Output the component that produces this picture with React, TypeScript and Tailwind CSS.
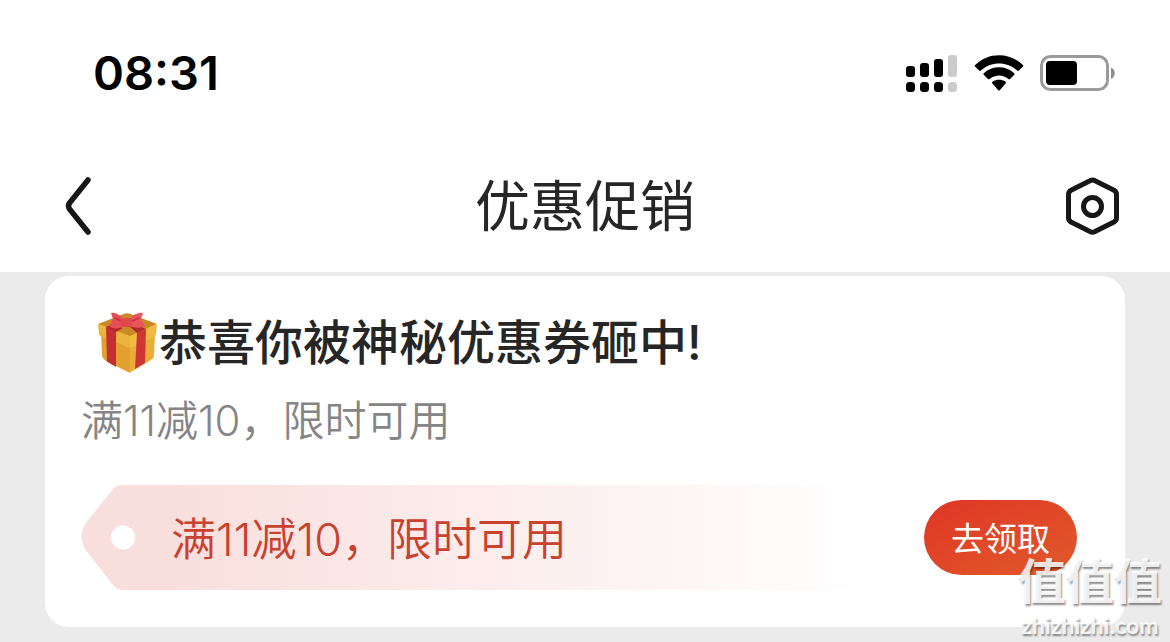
import React from 'react';

function SignalIcon() {
  return (
    <svg width="52" height="38" viewBox="0 0 52 38" aria-hidden="true">
      <rect x="0" y="11" width="9" height="11" rx="3" />
      <rect x="14" y="8" width="9" height="14" rx="3" />
      <rect x="28" y="4" width="9" height="18" rx="3" />
      <rect x="42" y="0" width="9" height="22" rx="3" fill="#cbcbcb" />
      <rect x="0" y="27" width="9" height="10" rx="3.5" />
      <rect x="14" y="27" width="9" height="10" rx="3.5" />
      <rect x="28" y="27" width="9" height="10" rx="3.5" />
      <rect x="42" y="27" width="9" height="10" rx="3.5" fill="#cbcbcb" />
    </svg>
  );
}

function WifiIcon() {
  return (
    <svg width="50" height="38" viewBox="0 0 50 38" aria-hidden="true">
      <path d="M1 11.5Q0.400 10.800 1.200 10C14.500 -3 35.500 -3 48.800 10Q49.600 10.800 49 11.500L44.800 15.600Q44 16.300 43.200 15.600C33 6 17 6 6.800 15.600Q6 16.300 5.200 15.600Z" />
      <path d="M9.700 19.700Q9 19 9.800 18.200C18.400 10.400 31.600 10.400 40.200 18.200Q41 19 40.300 19.700L36 24Q35.200 24.600 34.400 24C29 19.300 21 19.300 15.600 24Q14.800 24.600 14 24Z" />
      <path d="M18.300 28.300Q17.600 27.400 18.500 26.700C22.300 24.100 27.700 24.100 31.500 26.700Q32.400 27.400 31.700 28.300L25.800 35.200Q25 36 24.200 35.200Z" />
    </svg>
  );
}

function BatteryIcon() {
  return (
    <svg width="76" height="38" viewBox="0 0 76 38" aria-hidden="true">
      <rect x="1.500" y="1.500" width="66" height="33" rx="9" fill="#fff" stroke="#9b9b9b" strokeWidth="3" />
      <rect x="6" y="6" width="31" height="24" rx="4" />
      <path d="M71 12.500C76 15 76 21.500 71 24Z" fill="#8f8f8f" />
    </svg>
  );
}

function GiftIcon() {
  return (
    <svg className="shrink-0" width="62" height="62" viewBox="0 0 62 62" aria-hidden="true">
      <path d="M4 20L33 34V61L9 49Q5 46 5 43Z" fill="#e3a02f" />
      <path d="M33 33L58 20L57 44Q57 46 54 48L33 60.500Z" fill="#e9ad38" />
      <path d="M1 12L28 1.500Q30 1 32 1.500L60 12L33 25Z" fill="#c98a25" />
      <path d="M1 12L33 24V36L3 24Q2 23 2 22Z" fill="#edb43d" />
      <path d="M33 24L60 12L59 22Q59 24 57 25L33 36Z" fill="#f0ba43" />
      <path d="M9 15L19 19L19 55L10 49.500Z" fill="#c62f31" />
      <path d="M40 21L49 17L48 51L38 57Z" fill="#cf3534" />
      <path d="M9 15L16 12L26 16L19 20Z" fill="#b3282d" />
      <path d="M32 14L38 12L49 17L40 21Z" fill="#b3282d" />
      <path d="M28 8C21 1 16 0 14 1L16 7L12 14C17 18 23 17 28 13Z" fill="#e34f55" />
      <path d="M32 7C37 2 42 0 46 1L44 7L48 14C42 17 36 16 31 13Z" fill="#e9555a" />
      <path d="M18 6L27 10M42 6L33 10" stroke="#c93440" strokeWidth="1.500" strokeLinecap="round" />
      <rect x="24" y="6" width="11" height="9" rx="3.500" fill="#df4850" />
    </svg>
  );
}

export default function App() {
  return (
    <div className="relative flex min-h-screen flex-col overflow-hidden bg-[#ebebeb] font-['Inter','Noto_Sans_CJK_SC',sans-serif] text-[#262626]">
      <header className="bg-white">
        <div className="flex h-37 items-center justify-between pr-[54px] pl-[93px] text-black">
          <time className="pb-1 text-[47px] leading-none font-semibold">08:31</time>
          <div className="flex items-center gap-4">
            <SignalIcon />
            <WifiIcon />
            <BatteryIcon />
          </div>
        </div>
        <nav className="flex h-31 items-center justify-between px-[50px] pb-2">
          <button type="button" aria-label="返回" className="flex h-15 w-15 items-center pl-3">
            <svg width="32" height="60" viewBox="0 0 32 60" fill="none" stroke="#171717" strokeWidth="5.500" strokeLinecap="round" strokeLinejoin="round" aria-hidden="true">
              <path d="M26 4L7.500 27Q5.500 30 7.500 33L26 56" />
            </svg>
          </button>
          <h1 className="text-[55px] leading-15 font-normal">优惠促销</h1>
          <button type="button" aria-label="设置" className="flex h-15 w-15 items-center justify-end">
            <svg width="56" height="60" viewBox="0 0 56 60" fill="none" stroke="#171717" strokeWidth="5" strokeLinejoin="round" aria-hidden="true">
              <path d="M26 4.800Q28.500 3.400 31 4.800L50 14.300Q52.500 15.700 52.500 18.500V42Q52.500 44.600 50 46L31 55.600Q28.500 57 26 55.600L7 46Q4.500 44.600 4.500 42V18.500Q4.500 15.700 7 14.300Z" />
              <circle cx="28.500" cy="30.500" r="9" />
            </svg>
          </button>
        </nav>
      </header>

      <main className="px-[45px] pt-1 pb-4">
        <article className="rounded-3xl bg-white pt-8 pr-12 pb-[37px] pl-9">
          <h2 className="flex items-center pl-4 text-[48px] leading-[70px] font-medium">
            <GiftIcon />
            恭喜你被神秘优惠券砸中!
          </h2>
          <p className="mt-3 text-[42px] leading-[62px] font-[350] text-[#858585]">满11减10，限时可用</p>
          <div className="mt-[33px] flex items-center gap-12">
            <div className="flex h-[105px] flex-1">
              <svg width="60" height="105" viewBox="0 0 60 106" preserveAspectRatio="none" className="shrink-0" aria-hidden="true">
                <path fillRule="evenodd" d="M60 0H42Q36 0 32 4L5 38Q-4 52 5 66L32 101Q36 106 42 106H60ZM42 41A12 12 0 1 1 42 65A12 12 0 1 1 42 41Z" fill="#f8dedc" />
              </svg>
              <p className="flex flex-1 items-center bg-linear-to-r from-[#f8dedc] via-[#fceeed] via-50% to-white pt-1 pl-[30px] text-[45px] font-[350] text-[#c9412f]">
                满11减10，限时可用
              </p>
            </div>
            <button type="button" className="h-[75px] w-[153px] rounded-full bg-linear-to-br from-[#df3424] to-[#e1592b] pt-1 text-[33px] text-white">
              去领取
            </button>
          </div>
        </article>
      </main>

      <aside className="absolute right-2 bottom-1 flex flex-col items-center text-white/85 [text-shadow:1px_2px_2px_rgb(0_0_0/0.45)]">
        <span className="font-['Liberation_Sans','Noto_Sans_CJK_SC',sans-serif] text-[48px] leading-[56px] font-bold">值值值</span>
        <span className="font-['Lato',sans-serif] text-[23px] leading-7 font-bold">zhizhizhi.com</span>
      </aside>
    </div>
  );
}
